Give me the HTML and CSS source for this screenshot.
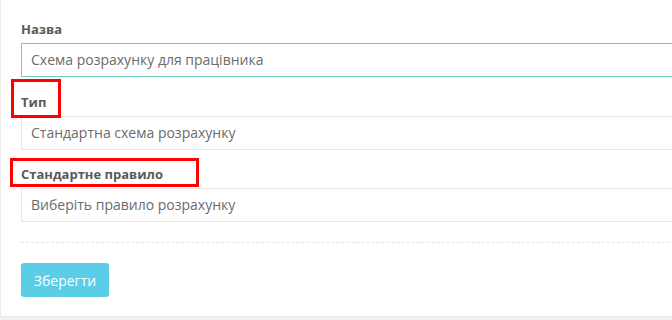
FILE: index.html
```html
<!DOCTYPE html>
<html lang="uk">
<head>
<meta charset="utf-8">
<title>Схема розрахунку</title>
<link rel="stylesheet" href="styles.css">
</head>
<body>
<div class="page">
  <form class="card">
    <div class="form-group form-group-first">
      <label class="label">Назва</label>
      <div class="input input-focus">Схема розрахунку для працівника</div>
    </div>
    <div class="form-group">
      <label class="label mark mark-type">Тип</label>
      <div class="input">Стандартна схема розрахунку</div>
    </div>
    <div class="form-group">
      <label class="label mark mark-rule">Стандартне правило</label>
      <div class="input">Виберіть правило розрахунку</div>
    </div>
    <div class="actions">
      <button type="button" class="btn">Зберегти</button>
    </div>
  </form>
</div>
</body>
</html>
```
FILE: styles.css
```css
html, body {
  margin: 0;
  padding: 0;
  overflow: hidden;
  background: #f1f1f5;
}
.page {
  width: 672px;
  height: 320px;
  overflow: hidden;
  font-family: "Open Sans", "Noto Sans", sans-serif;
}
.card {
  box-sizing: border-box;
  width: 720px;
  height: 317px;
  background: #fff;
  border-left: 1px solid #ebebeb;
  border-bottom: 1px solid #e9e9ee;
  padding: 20px 0 0 20px;
}
.form-group {
  margin-bottom: 15px;
}
.form-group-first {
  margin-bottom: 16px;
}
.label {
  display: block;
  position: relative;
  width: max-content;
  font-size: 13px;
  line-height: 18px;
  font-weight: 700;
  color: #5a5a5a;
  margin-bottom: 5px;
}
.mark::after {
  content: "";
  position: absolute;
  box-sizing: border-box;
  border: 3px solid #ff0000;
}
.mark-type::after {
  left: -10px;
  top: -14px;
  width: 50px;
  height: 39px;
}
.mark-rule::after {
  left: -11px;
  top: -7px;
  width: 189px;
  height: 29px;
}
.input {
  box-sizing: border-box;
  height: 34px;
  border: 1px solid #e5e5e5;
  background: #fff;
  padding: 0 9px;
  font-size: 14px;
  line-height: 32px;
  color: #6b6b6b;
}
.input-focus {
  border-color: #6fcdb7;
}
.actions {
  border-top: 1px dashed #e3e3e3;
  margin-top: 20px;
  padding-top: 20px;
}
.btn {
  box-sizing: border-box;
  width: 88px;
  height: 34px;
  border: 0;
  border-radius: 3px;
  background: #5bcde6;
  color: #fff;
  font-family: "Open Sans", "Noto Sans", sans-serif;
  font-size: 14px;
  padding: 0;
}
```
